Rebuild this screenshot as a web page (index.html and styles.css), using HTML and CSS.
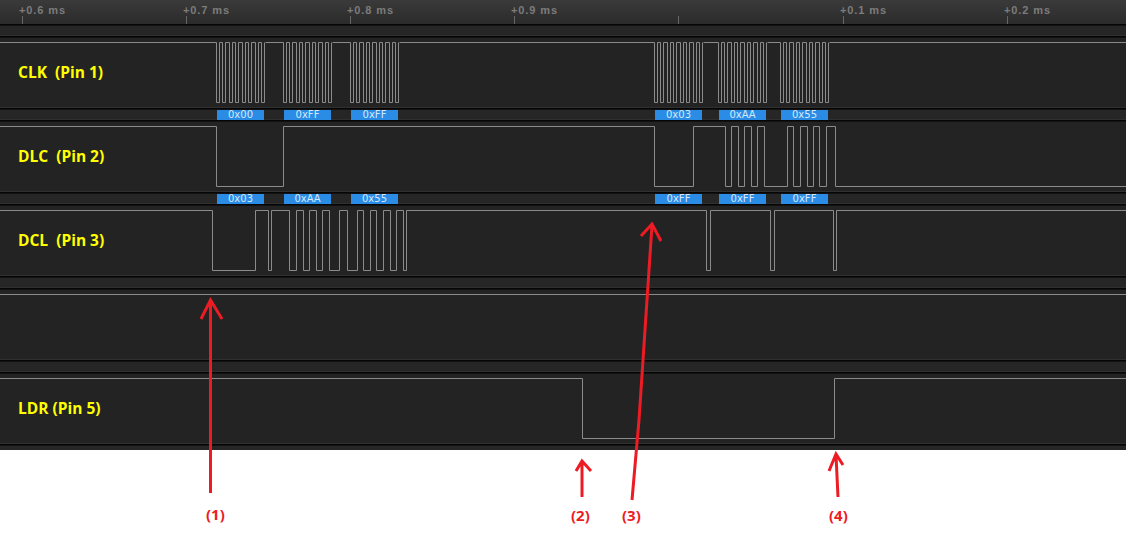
FILE: index.html
```html
<!DOCTYPE html>
<html lang="en">
<head>
    <meta charset="UTF-8">
    <title>Logic analyzer capture</title>
    <link rel="stylesheet" href="styles.css">
</head>
<body>
    <div class="capture">
        <!-- Time ruler -->
        <div class="ruler">
            <div class="tick" style="left: 22px"><span>+0.6 ms</span></div>
            <div class="tick" style="left: 186px"><span>+0.7 ms</span></div>
            <div class="tick" style="left: 350px"><span>+0.8 ms</span></div>
            <div class="tick" style="left: 514px"><span>+0.9 ms</span></div>
            <div class="tick" style="left: 678px"></div>
            <div class="tick" style="left: 843px"><span>+0.1 ms</span></div>
            <div class="tick" style="left: 1007px"><span>+0.2 ms</span></div>
        </div>
        <div class="band"></div>

        <!-- CLK -->
        <div class="track">
            <svg class="wave" width="1126" height="71">
                <defs>
                    <path id="burst" d="M0 5.5v60h3v-60h3v60h3v-60h4v60h3v-60h3v60h3v-60h4v60h3v-60h3v60h3v-60h4v60h3v-60h3v60h3v-60"/>
                </defs>
                <path d="M0 5.5H216.5M265.5 5.5H283.5M332.5 5.5H350.5M399.5 5.5H654.5M703.5 5.5H718.5M767.5 5.5H780.5M829.5 5.5H1126"/>
                <use href="#burst" x="216.5"/>
                <use href="#burst" x="283.5"/>
                <use href="#burst" x="350.5"/>
                <use href="#burst" x="654.5"/>
                <use href="#burst" x="718.5"/>
                <use href="#burst" x="780.5"/>
            </svg>
            <span class="name">CLK  (Pin 1)</span>
        </div>
        <div class="band">
            <span class="byte" style="left: 217px">0x00</span>
            <span class="byte" style="left: 284px">0xFF</span>
            <span class="byte" style="left: 351px">0xFF</span>
            <span class="byte" style="left: 655px">0x03</span>
            <span class="byte" style="left: 719px">0xAA</span>
            <span class="byte" style="left: 781px">0x55</span>
        </div>

        <!-- DLC -->
        <div class="track">
            <svg class="wave" width="1126" height="71">
                <path d="M0 5.5H216.5V65.5H283.5V5.5H654.5V65.5H693.5V5.5H725.5V65.5H731.5V5.5H738.5V65.5H744.5V5.5H751.5V65.5H757.5V5.5H764.5V65.5H787.5V5.5H793.5V65.5H800.5V5.5H807.5V65.5H813.5V5.5H819.5V65.5H826.5V5.5H835.5V65.5H1126"/>
            </svg>
            <span class="name">DLC  (Pin 2)</span>
        </div>
        <div class="band">
            <span class="byte" style="left: 217px">0x03</span>
            <span class="byte" style="left: 284px">0xAA</span>
            <span class="byte" style="left: 351px">0x55</span>
            <span class="byte" style="left: 655px">0xFF</span>
            <span class="byte" style="left: 719px">0xFF</span>
            <span class="byte" style="left: 781px">0xFF</span>
        </div>

        <!-- DCL -->
        <div class="track">
            <svg class="wave" width="1126" height="71">
                <path d="M0 5.5H212.5V65.5H255.5V5.5H268.5V65.5H271.5V5.5H289.5V65.5H296.5V5.5H303.5V65.5H309.5V5.5H316.5V65.5H322.5V5.5H329.5V65.5H339.5V5.5H347.5V65.5H357.5V5.5H363.5V65.5H370.5V5.5H376.5V65.5H383.5V5.5H390.5V65.5H396.5V5.5H403.5V65.5H406.5V5.5H706.5V65.5H710.5V5.5H770.5V65.5H774.5V5.5H833.5V65.5H836.5V5.5H1126"/>
            </svg>
            <span class="name">DCL  (Pin 3)</span>
        </div>
        <div class="band"></div>

        <!-- empty channel -->
        <div class="track">
            <svg class="wave" width="1126" height="71">
                <path d="M0 5.5H1126"/>
            </svg>
        </div>
        <div class="band"></div>

        <!-- LDR -->
        <div class="track">
            <svg class="wave" width="1126" height="71">
                <path d="M0 5.5H582.5V65.5H834.5V5.5H1126"/>
            </svg>
            <span class="name">LDR (Pin 5)</span>
        </div>
        <div class="foot"></div>
    </div>

    <!-- Hand drawn notes on top of the capture -->
    <svg class="arrows" width="1126" height="542">
        <path d="M210.5 493V299M201 319L210.5 300L222 319"/>
        <path d="M582 497V461M576 471L582 461L591 471"/>
        <path d="M632 500L639 420L652 225M641 236L652 224L661 241"/>
        <path d="M838 497L836 455M829 471L836 454L843 465"/>
    </svg>
    <span class="note" style="left: 206px; top: 504px">(1)</span>
    <span class="note" style="left: 571px; top: 505px">(2)</span>
    <span class="note" style="left: 622px; top: 505px">(3)</span>
    <span class="note" style="left: 829px; top: 505px">(4)</span>
</body>
</html>
```

FILE: styles.css
```css
body {
    margin: 0;
    background: #fff;
    height: 542px;
    overflow: hidden;
    position: relative;
}

.capture {
    background: #232323;
}

.ruler {
    position: relative;
    height: 24px;
    background: linear-gradient(#3a3a3a, #2b2b2b);
    border-bottom: 1px solid #060606;
}

.tick {
    position: absolute;
    top: 16px;
    width: 1px;
    height: 8px;
    background: #666;
}

.tick span {
    position: absolute;
    left: -3px;
    top: -12px;
    font: bold 11px "Liberation Sans", sans-serif;
    letter-spacing: 0.9px;
    color: #7c7c7c;
    white-space: nowrap;
}

.band {
    position: relative;
    height: 11px;
    background: #262626;
    border-bottom: 1px solid #060606;
    box-shadow: inset 0 1px #121212, inset 0 -1px #303030;
}

.track {
    position: relative;
    display: flex;
    align-items: center;
    height: 71px;
    padding-left: 18px;
    border-bottom: 1px solid #060606;
    box-shadow: inset 0 1px #121212, inset 0 -1px #303030;
}

.wave {
    position: absolute;
    left: 0;
    top: 0;
    fill: none;
    stroke: #8b8b8b;
    stroke-width: 1;
}

.name {
    position: relative;
    top: -1px;
    font: bold 15.5px "Open Sans", sans-serif;
    color: #ff0;
    white-space: pre;
}

.byte {
    position: absolute;
    top: 1px;
    width: 47px;
    height: 10px;
    background: #2b8ce6;
    color: #d5e9fb;
    font: 10px/10px "DejaVu Sans", sans-serif;
    text-align: center;
}

.foot {
    height: 5px;
    background: #262626;
    box-shadow: inset 0 1px #121212;
}

.arrows {
    position: absolute;
    left: 0;
    top: 0;
    fill: none;
    stroke: #ed1c24;
    stroke-width: 3;
}

.note {
    position: absolute;
    font: bold 15px "Open Sans", sans-serif;
    color: #ed1c24;
}
```
